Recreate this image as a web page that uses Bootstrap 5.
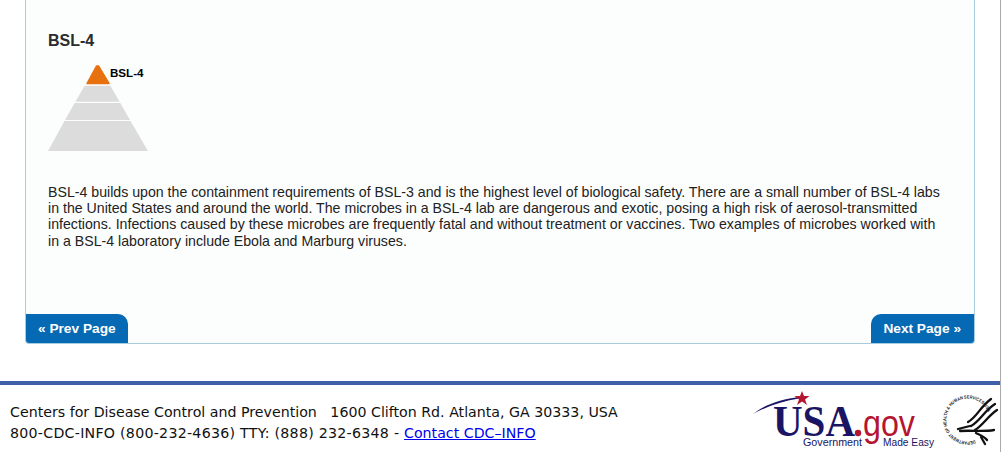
<!DOCTYPE html>
<html lang="en">
<head>
<meta charset="utf-8">
<title>BSL-4</title>
<link href="https://cdn.jsdelivr.net/npm/bootstrap@5.3.0/dist/css/bootstrap.min.css" rel="stylesheet">
<style>
html,body{height:452px;overflow:hidden;background:#fff}
body{font-family:"Liberation Sans",Arial,sans-serif;color:#222;border-right:1px solid #aaa}
.panel-box{margin:0 25px;height:344px;background:#fcfefe;border:1px solid #a8cbe0;border-top:0;border-radius:0 0 4px 4px;padding:32px 22px 0;overflow:hidden}
.panel-title{font-size:16px;font-weight:700;line-height:18px;color:#2b2b2b;margin:0 0 14px}
.pyramid{display:block;width:102px;height:90px}
.pyramid text{font-family:"Liberation Sans",Arial,sans-serif;font-size:11.6px;font-weight:700;fill:#000}
.panel-copy{font-size:14.16px;line-height:16.2px;color:#222;margin:30px 0 0;width:895px}
.tab-row{margin:auto -22px 0}
.page-tab{background:#0569b3;color:#fff;font-size:13.7px;font-weight:700;line-height:15px;padding:7px 12px;text-decoration:none;height:29px;display:block}
.tab-prev{border-radius:0 10px 0 0}
.tab-next{border-radius:10px 0 0 0;padding-right:13px}
.site-foot{margin-top:37px;border-top:4px solid #3f5fa8;height:71px;padding:0 1px 0 10px}
.foot-text{font-family:"DejaVu Sans",Verdana,sans-serif;font-size:14.2px;line-height:21px;color:#111;padding-top:17px;white-space:nowrap}
.foot-text a{color:#00e}
.foot-phone{letter-spacing:.26px}
.foot-logos text{font-family:"Liberation Sans",Arial,sans-serif}
.foot-logos .usa-word{font-family:"Liberation Serif",serif}
</style>
</head>
<body>
<main class="panel-box d-flex flex-column">
  <h2 class="panel-title">BSL-4</h2>
  <svg class="pyramid" viewBox="0 0 102 90" role="img" aria-label="BSL-4 pyramid">
    <polygon points="36.600,21.700 62.400,21.700 71.600,37.700 27.400,37.700" fill="#dcdcdc"/>
    <polygon points="26.700,39 72.300,39 82,56 17,56" fill="#dcdcdc"/>
    <polygon points="16.500,57 82.500,57 100,87 0,87" fill="#dcdcdc"/>
    <path d="M48.500 2 L50.500 2 L61 19.500 L39 19.500 Z" fill="#e8710f" stroke="#e8710f" stroke-width="1.500" stroke-linejoin="round"/>
    <text x="62" y="12.500">BSL-4</text>
  </svg>
  <p class="panel-copy">BSL-4 builds upon the containment requirements of BSL-3 and is the highest level of biological safety. There are a small number of BSL-4 labs in the United States and around the world. The microbes in a BSL-4 lab are dangerous and exotic, posing a high risk of aerosol-transmitted infections. Infections caused by these microbes are frequently fatal and without treatment or vaccines. Two examples of microbes worked with in a BSL-4 laboratory include Ebola and Marburg viruses.</p>
  <div class="d-flex justify-content-between tab-row">
    <a class="page-tab tab-prev" href="#">« Prev Page</a>
    <a class="page-tab tab-next" href="#">Next Page »</a>
  </div>
</main>
<footer class="site-foot d-flex justify-content-between">
  <div class="foot-text">
    <div>Centers for Disease Control and Prevention &nbsp; 1600 Clifton Rd. Atlanta, GA 30333, USA</div>
    <div><span class="foot-phone">800-CDC-INFO (800-232-4636) TTY: (888) 232-6348 - </span><a href="#">Contact CDC–INFO</a></div>
  </div>
  <svg class="foot-logos" width="250" height="67" viewBox="0 0 250 67" role="img" aria-label="USA.gov and HHS logos">
    <path d="M4 29 C16 19 34 14 50 12 L50 13.500 C34 16 18 21 4 29Z" fill="#1a1464"/>
    <polygon points="53,6 55,11 60.500,11 56,14.500 58,20 53,16.500 48,20 50,14.500 45.500,11 51,11" fill="#b4152f"/>
    <text class="usa-word" x="24" y="51" font-size="44" font-weight="700" fill="#1a1464" textLength="82" lengthAdjust="spacingAndGlyphs">USA</text>
    <circle cx="109" cy="48" r="3.200" fill="#b4152f"/>
    <text x="114" y="51" font-size="36" fill="#b4152f" textLength="52" lengthAdjust="spacingAndGlyphs">gov</text>
    <text x="54" y="60.500" font-size="10" fill="#1a1464" textLength="59" lengthAdjust="spacingAndGlyphs">Government</text>
    <text x="134" y="60.500" font-size="10" fill="#1a1464" textLength="51" lengthAdjust="spacingAndGlyphs">Made Easy</text>
    <defs><path id="sealRing" d="M226 55.300 A21.500 21.500 0 1 1 239.500 29"/></defs>
    <text font-size="4.600" font-weight="700" fill="#222"><textPath href="#sealRing" textLength="100" lengthAdjust="spacingAndGlyphs">DEPARTMENT OF HEALTH &amp; HUMAN SERVICES·USA</textPath></text>
    <g fill="none" stroke="#111" stroke-width="2.300" stroke-linecap="round" stroke-linejoin="round">
      <path d="M219 37 C228 32 231 22 242 14"/>
      <path d="M222 41 C231 36 235 26 246 19"/>
      <path d="M226 45 C234 40 239 31 248 25"/>
      <path d="M209 44 L221 41 M211 46 C222 45 234 47 245 45"/>
      <path d="M227 48 C231 50 236 52 238 55 M232 52 L236 59"/>
    </g>
  </svg>
</footer>
</body>
</html>
